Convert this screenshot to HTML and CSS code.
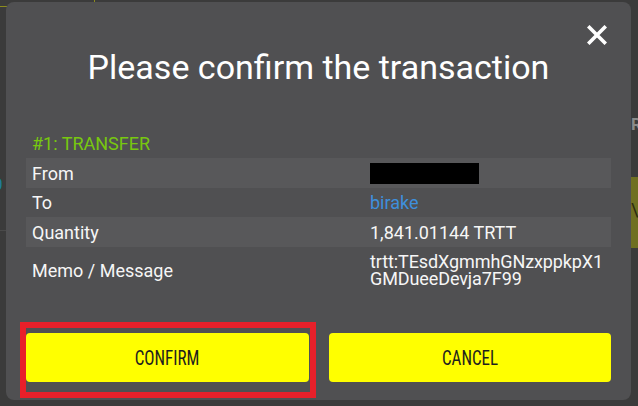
FILE: index.html
```html
<!DOCTYPE html>
<html>
<head>
<meta charset="utf-8">
<link rel="stylesheet" href="styles.css">
</head>
<body>
<div class="page">
  <div class="bg-line-h"></div>
  <div class="bg-line-v"></div>
  <div class="bg-left-digit">0</div>
  <div class="bg-left-rule"></div>
  <div class="bg-right-letter">R</div>
  <div class="bg-right-box"><span>\</span></div>

  <div class="modal">
    <button class="close" aria-label="Close">
      <svg width="20" height="20" viewBox="0 0 20 20"><path d="M2.5 2.5 L17.5 17.5 M17.5 2.5 L2.5 17.5" stroke="#fff" stroke-width="3.6" stroke-linecap="square"/></svg>
    </button>
    <h1 class="title">Please confirm the transaction</h1>
    <div class="action-label">#1: TRANSFER</div>
    <div class="details">
      <div class="row shaded">
        <div class="key">From</div>
        <div class="val"><span class="redacted"></span></div>
      </div>
      <div class="row">
        <div class="key">To</div>
        <div class="val link">birake</div>
      </div>
      <div class="row shaded">
        <div class="key">Quantity</div>
        <div class="val">1,841.01144 TRTT</div>
      </div>
      <div class="row memo">
        <div class="key">Memo / Message</div>
        <div class="val wrap">trtt:TEsdXgmmhGNzxppkpX1GMDueeDevja7F99</div>
      </div>
    </div>
    <div class="actions">
      <button class="btn"><span class="btn-text">CONFIRM</span></button>
      <button class="btn"><span class="btn-text">CANCEL</span></button>
    </div>
    <div class="highlight"></div>
  </div>
</div>
</body>
</html>
```

FILE: styles.css
```css
html, body {
  margin: 0;
  padding: 0;
}
body {
  background: #3b3b3b;
  font-family: Roboto, "Liberation Sans", sans-serif;
  color: #f2f2f2;
}
.page {
  position: relative;
  width: 638px;
  height: 406px;
  overflow: hidden;
  padding-top: 2px;
  box-sizing: border-box;
}

/* page behind the dialog */
.bg-line-h {
  position: absolute;
  left: 0;
  top: 6px;
  width: 8px;
  height: 1px;
  background: #8c8c1e;
}
.bg-line-v {
  position: absolute;
  left: 94px;
  top: 0;
  width: 1px;
  height: 2px;
  background: #8c8c1e;
}
.bg-left-digit {
  position: absolute;
  left: -7px;
  top: 174px;
  font-size: 17px;
  color: #1d7d98;
}
.bg-left-rule {
  position: absolute;
  left: 0;
  top: 230px;
  width: 6px;
  height: 1px;
  background: #4a4a4a;
}
.bg-right-letter {
  position: absolute;
  left: 631px;
  top: 114px;
  font-size: 17px;
  font-weight: 700;
  color: #8a8a8a;
}
.bg-right-box {
  position: absolute;
  left: 631px;
  top: 177px;
  width: 10px;
  height: 71px;
  background: #6f6f22;
  overflow: hidden;
}
.bg-right-box span {
  display: block;
  margin-top: 22px;
  margin-left: 0;
  font-size: 18px;
  color: #2a2a10;
}

/* dialog */
.modal {
  position: relative;
  margin-left: 6px;
  width: 625px;
  height: 398px;
  box-sizing: border-box;
  background: #505052;
  border-radius: 8px;
  padding: 45px 20px 0 20px;
}
.close {
  position: absolute;
  top: 23px;
  right: 24px;
  width: 20px;
  height: 20px;
  padding: 0;
  border: 0;
  background: none;
  cursor: pointer;
  display: flex;
}
.title {
  margin: 0;
  font-size: 34px;
  line-height: 40px;
  font-weight: 400;
  text-align: center;
  color: #ffffff;
}
.action-label {
  margin-top: 47px;
  height: 20px;
  line-height: 20px;
  padding-left: 6px;
  font-size: 18px;
  color: #78c80f;
  margin-bottom: 4px;
}
.details {
  display: flex;
  flex-direction: column;
}
.row {
  display: grid;
  grid-template-columns: 338px 1fr;
  align-items: center;
  height: 30px;
  font-size: 18px;
  color: #f6f6f6;
}
.row:nth-child(2) {
  height: 29px;
}
.row.shaded {
  background: #58585a;
}
.row.memo {
  height: 46px;
}
.key {
  padding-left: 6px;
}
.val {
  padding: 0 6px;
}
.val.link {
  color: #3e8fdc;
}
.val.wrap {
  line-height: 17px;
  word-break: break-all;
  padding-right: 0;
  letter-spacing: -0.1px;
}
.redacted {
  display: block;
  width: 109px;
  height: 21px;
  background: #000;
}
.actions {
  margin-top: 40px;
  display: grid;
  grid-template-columns: 1fr 1fr;
  gap: 20px;
}
.btn {
  height: 49px;
  border: 0;
  border-radius: 4px;
  background: #ffff00;
  color: #1e1e1e;
  font-family: "Roboto Condensed", Roboto, sans-serif;
  font-size: 20px;
  cursor: pointer;
  padding: 0;
}
.btn-text {
  display: inline-block;
  transform: scaleX(0.85);
}
.highlight {
  position: absolute;
  left: 14px;
  top: 320px;
  width: 296px;
  height: 76px;
  box-sizing: border-box;
  border: 6px solid #e8202a;
  pointer-events: none;
}
```
